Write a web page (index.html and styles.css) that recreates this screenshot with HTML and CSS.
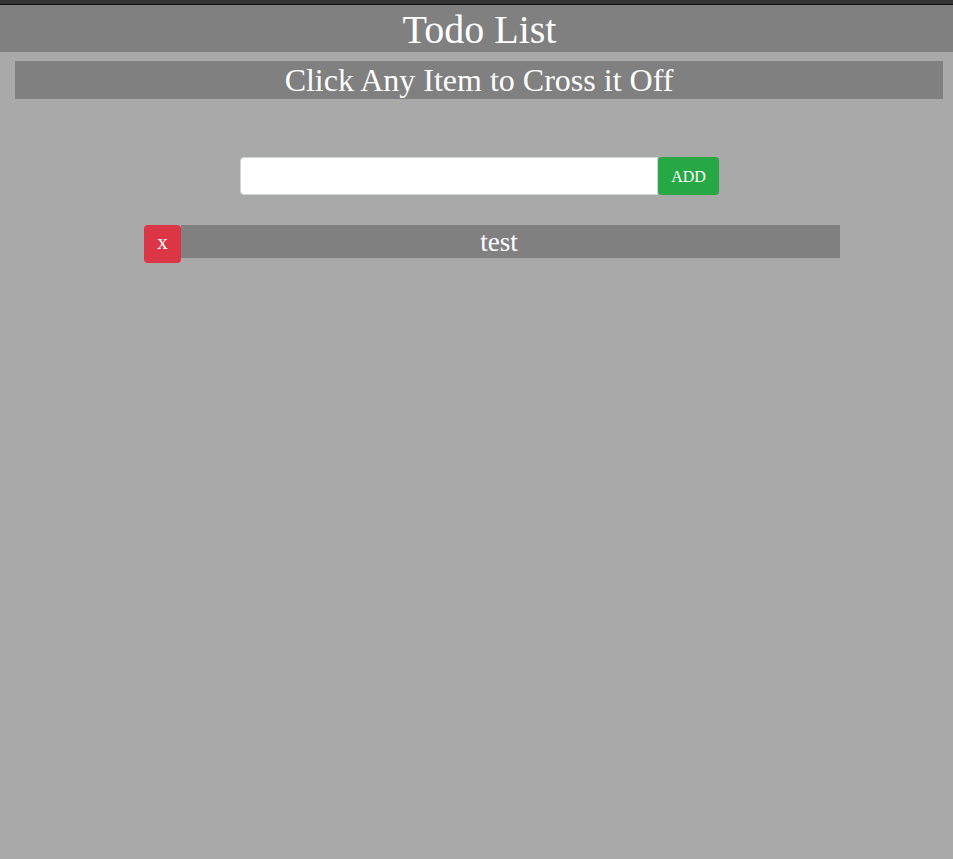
FILE: index.html
```html
<!DOCTYPE html>
<html>
<head>
<meta charset="utf-8">
<title>Todo List</title>
<link rel="stylesheet" href="styles.css">
</head>
<body>
<div class="topbar"></div>
<h1 class="title">Todo List</h1>
<div class="subtitle">Click Any Item to Cross it Off</div>
<div class="form">
  <div class="group">
    <input class="field" type="text">
    <button class="add">ADD</button>
  </div>
</div>
<ul class="list">
  <li class="item">
    <button class="del">x</button>
    <span class="text">test</span>
  </li>
</ul>
</body>
</html>
```
FILE: styles.css
```css
html, body {
  margin: 0;
  padding: 0;
  background: #a9a9a9;
  font-family: "Liberation Serif", "Times New Roman", serif;
  color: #fff;
}
.topbar {
  height: 4px;
  background: #343434;
  border-bottom: 1px solid #111;
}
.title {
  margin: 0;
  background: #808080;
  height: 47px;
  line-height: 49px;
  font-size: 40px;
  font-weight: normal;
  text-align: center;
  padding-left: 6px;
}
.subtitle {
  margin: 9px 10px 0 15px;
  background: #808080;
  height: 38px;
  line-height: 38px;
  font-size: 32px;
  text-align: center;
}
.form {
  margin-top: 58px;
  display: flex;
  justify-content: center;
  padding-left: 6px;
}
.group {
  display: flex;
}
.field {
  box-sizing: border-box;
  width: 418px;
  height: 38px;
  border: 1px solid #ced4da;
  border-radius: 4px 0 0 4px;
  background: #fff;
  margin: 0;
  padding: 0 12px;
  outline: none;
}
.add {
  box-sizing: border-box;
  width: 61px;
  height: 38px;
  margin: 0;
  border: none;
  border-radius: 4px;
  background: #28a745;
  color: #fff;
  font-family: "Liberation Serif", "Times New Roman", serif;
  font-size: 16px;
  padding: 2px 0 0;
}
.list {
  list-style: none;
  margin: 30px 0 0 144px;
  padding: 0;
  width: 696px;
}
.item {
  display: flex;
  align-items: flex-start;
}
.del {
  box-sizing: border-box;
  width: 37px;
  height: 38px;
  flex: none;
  margin: 0;
  padding: 0 0 3px;
  border: none;
  border-radius: 4px;
  background: #dc3545;
  color: #fff;
  font-family: "Liberation Serif", "Times New Roman", serif;
  font-size: 21px;
}
.text {
  flex: 1;
  height: 33px;
  line-height: 34px;
  background: #808080;
  font-size: 27px;
  text-align: center;
  padding-right: 23px;
}
```
